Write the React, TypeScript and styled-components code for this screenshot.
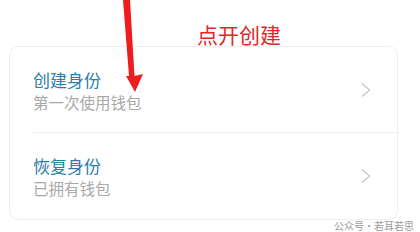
import React from "react";
import styled, { createGlobalStyle } from "styled-components";

const GlobalStyle = createGlobalStyle`
  html, body {
    margin: 0;
    padding: 0;
    background: #ffffff;
    font-family: "Noto Sans CJK SC", "Noto Sans", sans-serif;
  }
`;

const Page = styled("div")`
  position: relative;
  width: 420px;
  height: 232px;
  overflow: hidden;
  padding-top: 46px;
  box-sizing: border-box;
`;

const Card = styled("div")`
  margin-left: 9px;
  width: 389px;
  border: 1px solid #eeeeee;
  border-radius: 9px;
  background: #ffffff;
  box-sizing: border-box;
`;

const Row = styled("div")<{ $divider?: boolean }>`
  height: 86px;
  display: flex;
  align-items: center;
  padding: 0 25px 0 23px;
  position: relative;
  ${p =>
    p.$divider &&
    `
    &::after {
      content: "";
      position: absolute;
      left: 23px;
      right: 0;
      bottom: 0;
      height: 1px;
      background: #f0f0f0;
    }
  `}
`;

const Texts = styled("div")`
  flex: 1;
  display: flex;
  flex-direction: column;
  gap: 3px;
`;

const Title = styled("div")`
  font-size: 17px;
  line-height: 20px;
  color: #2a7ea8;
`;

const Subtitle = styled("div")`
  font-size: 15.5px;
  line-height: 18px;
  color: #a9a9a9;
`;

const Chevron = () => (
  <svg width="12" height="16" viewBox="0 0 12 16">
    <path d="M2 1.5 L9.5 8 L2 14.5" fill="none" stroke="#c6c6c6" strokeWidth="1.3" />
  </svg>
);

const Annotation = styled("div")`
  position: absolute;
  left: 197px;
  top: 21px;
  font-size: 21px;
  line-height: 26px;
  color: #e3262a;
`;

const ArrowLayer = styled("svg")`
  position: absolute;
  left: 0;
  top: 0;
  pointer-events: none;
`;

const Watermark = styled("div")`
  position: absolute;
  left: 334px;
  top: 220px;
  font-size: 10px;
  line-height: 12px;
  color: #9a9a9a;
  white-space: nowrap;
`;

export default function App() {
  return (
    <>
      <GlobalStyle />
      <Page>
        <Card>
          <Row $divider>
            <Texts>
              <Title>创建身份</Title>
              <Subtitle>第一次使用钱包</Subtitle>
            </Texts>
            <Chevron />
          </Row>
          <Row>
            <Texts>
              <Title>恢复身份</Title>
              <Subtitle>已拥有钱包</Subtitle>
            </Texts>
            <Chevron />
          </Row>
        </Card>
        <Annotation>点开创建</Annotation>
        <ArrowLayer width="420" height="232" viewBox="0 0 420 232">
          <polygon points="123,0 130,0 134.5,76 143,74 135,92 126,76 129,76" fill="#ee1c1c" />
        </ArrowLayer>
        <Watermark>公众号·若耳若思</Watermark>
      </Page>
    </>
  );
}
